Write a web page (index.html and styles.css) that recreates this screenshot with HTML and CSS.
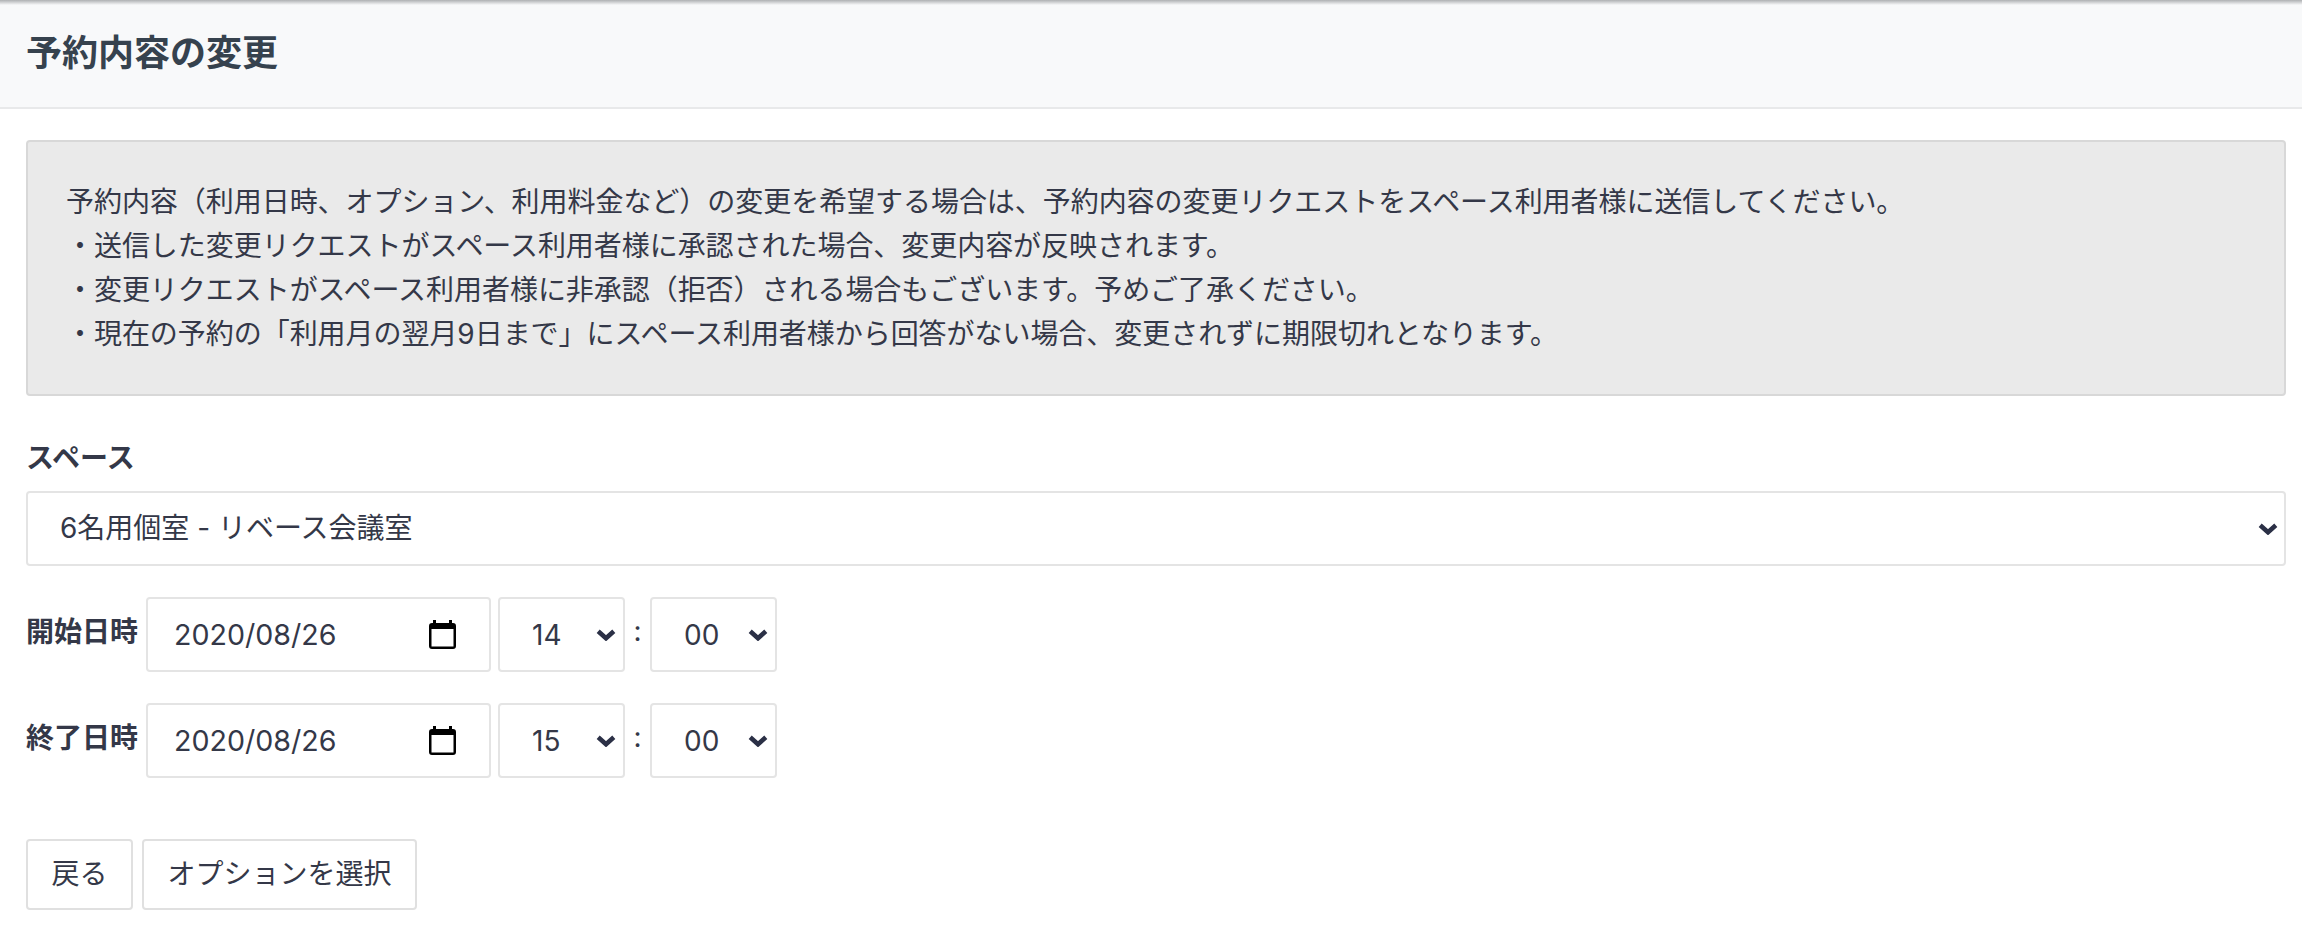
FILE: index.html
```html
<!DOCTYPE html>
<html lang="ja">
<head>
<meta charset="utf-8">
<title>予約内容の変更</title>
<link rel="stylesheet" href="styles.css">
</head>
<body>
<header class="page-head">
	<h1 class="page-title">予約内容の変更</h1>
</header>
<main class="content">
	<div class="notice">
		<p>予約内容（利用日時、オプション、利用料金など）の変更を希望する場合は、予約内容の変更リクエストをスペース利用者様に送信してください。</p>
		<p>・送信した変更リクエストがスペース利用者様に承認された場合、変更内容が反映されます。</p>
		<p>・変更リクエストがスペース利用者様に非承認（拒否）される場合もございます。予めご了承ください。</p>
		<p>・現在の予約の「利用月の翌月9日まで」にスペース利用者様から回答がない場合、変更されずに期限切れとなります。</p>
	</div>

	<label class="field-label" for="space">スペース</label>
	<select class="select select-wide" id="space">
		<option>6名用個室 - リベース会議室</option>
	</select>

	<div class="date-row">
		<span class="row-label">開始日時</span>
		<div class="date-field">
			<span class="date-text">2020/08/26</span>
			<svg class="cal-icon" viewBox="0 0 27 29"><path fill-rule="evenodd" d="M4 0h3v3h13V0h3v3h1a3 3 0 0 1 3 3v20a3 3 0 0 1-3 3H3a3 3 0 0 1-3-3V6a3 3 0 0 1 3-3h1zM2.500 9v17.500h22V9z"/></svg>
		</div>
		<select class="select select-time"><option>14</option></select>
		<span class="colon">:</span>
		<select class="select select-time"><option>00</option></select>
	</div>

	<div class="date-row">
		<span class="row-label">終了日時</span>
		<div class="date-field">
			<span class="date-text">2020/08/26</span>
			<svg class="cal-icon" viewBox="0 0 27 29"><path fill-rule="evenodd" d="M4 0h3v3h13V0h3v3h1a3 3 0 0 1 3 3v20a3 3 0 0 1-3 3H3a3 3 0 0 1-3-3V6a3 3 0 0 1 3-3h1zM2.500 9v17.500h22V9z"/></svg>
		</div>
		<select class="select select-time"><option>15</option></select>
		<span class="colon">:</span>
		<select class="select select-time"><option>00</option></select>
	</div>

	<div class="actions">
		<button class="btn btn-back" type="button">戻る</button>
		<button class="btn btn-next" type="button">オプションを選択</button>
	</div>
</main>
</body>
</html>
```

FILE: styles.css
```css
*{box-sizing:border-box;margin:0;padding:0;}
html,body{height:100%;}
body{background:#fff;color:#343848;font-family:Inter,"Noto Sans CJK JP",sans-serif;font-size:28px;line-height:44.2px;overflow:hidden;}

.page-head{height:109px;padding:0 0 2px 26px;display:flex;align-items:center;background:linear-gradient(#aeb0b2,#f8f9fa 5px);border-bottom:2px solid #e8e9ea;}
.page-title{font-size:36px;font-weight:700;line-height:50px;color:#36424e;}

.content{padding:31px 16px 0 26px;}

.notice{height:256px;padding:37.5px 38px;background:#eaeaea;border:2px solid #d8d8d8;border-radius:4px;letter-spacing:-.045px;}

.field-label{display:block;margin-top:40px;margin-bottom:11px;font-weight:700;}

.select{appearance:none;-webkit-appearance:none;display:block;height:75px;background-color:#fff;background-image:url("data:image/svg+xml,%3Csvg xmlns='http://www.w3.org/2000/svg' viewBox='0 0 18 12'%3E%3Cpath d='M1.800 3l7.200 6.500 7.200-6.500' fill='none' stroke='%232b3046' stroke-width='4.200'/%3E%3C/svg%3E");background-repeat:no-repeat;background-size:20px 13px;border:2px solid #e4e4e4;border-radius:4px;color:#343848;font:inherit;line-height:normal;}
.select-wide{width:100%;padding:0 40px 2px 32px;background-position:right 6px center;}
.select-time{width:127px;padding:0 28px 0 32px;background-position:right 7px center;}

.date-row{display:flex;align-items:center;margin-top:31px;}
.row-label{width:120px;font-weight:700;padding-bottom:6px;}
.date-field{width:345px;height:75px;margin-right:7px;padding:0 33px 0 26px;display:flex;align-items:center;justify-content:space-between;border:2px solid #e4e4e4;border-radius:4px;}
.date-text{font-size:28.6px;}
.cal-icon{width:27px;height:29px;fill:#000;}
.colon{width:25px;text-align:center;padding-bottom:8px;}

.actions{display:flex;gap:9px;margin-top:61px;}
.btn{height:71px;padding-bottom:2px;background:#fff;border:2px solid #e0e0e0;border-radius:4px;color:#343848;font:inherit;}
.btn-back{width:107px;}
.btn-next{width:275px;}
```
